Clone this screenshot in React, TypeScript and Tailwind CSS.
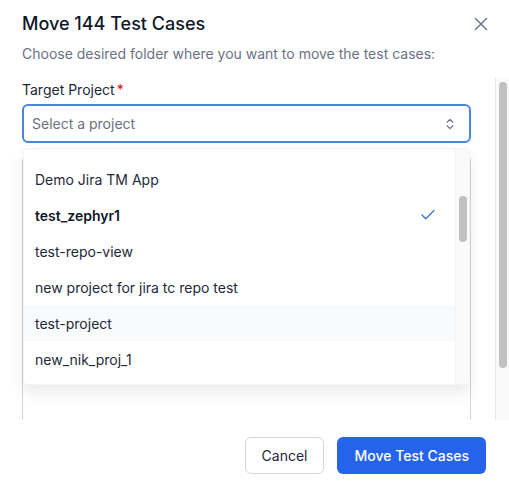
import { X, ChevronsUpDown, Check } from 'lucide-react'

const projects = [
  { id: 'demo', name: 'Demo Jira TM App' },
  { id: 'zephyr', name: 'test_zephyr1', selected: true },
  { id: 'repo', name: 'test-repo-view' },
  { id: 'jira', name: 'new project for jira tc repo test' },
  { id: 'tp', name: 'test-project', hover: true },
  { id: 'nik', name: 'new_nik_proj_1' },
]

export default function App() {
  return (
    <div className="w-[509px] h-[489px] bg-white flex flex-col text-gray-900 overflow-hidden" style={{ fontFamily: 'Inter, "Noto Sans", sans-serif' }}>
      {/* Header */}
      <div className="px-[22px] pt-[12px] shrink-0">
        <div className="flex items-center justify-between">
          <h1 className="text-[18px] leading-[24px] font-medium text-gray-900">Move 144 Test Cases</h1>
          <button className="text-gray-500 mr-[-5px]">
            <X size={22} strokeWidth={1.5} />
          </button>
        </div>
        <p className="mt-[9px] text-[14px] leading-[18px] text-gray-500">
          Choose desired folder where you want to move the test cases:
        </p>
      </div>

      {/* Body */}
      <div className="flex-1 flex min-h-0 mt-[15px]">
        <div className="flex-1 min-w-0 relative overflow-hidden pl-[22px] pr-[24px]">
          <div className="mt-[3px] text-[14px] leading-[18px] text-gray-800">
            Target Project<span className="text-red-600 ml-[2px]">*</span>
          </div>
          <div className="mt-[5px] h-[39px] border-2 border-[#4a86e0] rounded-[6px] flex items-center justify-between pl-[8px] pr-[12px]">
            <span className="text-[14px] text-gray-500">Select a project</span>
            <ChevronsUpDown size={14} strokeWidth={2} className="text-gray-500" />
          </div>
          <div className="mt-[12px] h-[400px] border border-gray-300 rounded-[6px]" />

          {/* Dropdown menu */}
          <div className="absolute left-[23px] top-[70px] w-[447px] h-[237px] bg-white rounded-[4px] border border-gray-100 shadow-[0_8px_14px_rgba(0,0,0,0.08)] flex overflow-hidden">
            <div className="flex-1 pt-[12px]">
              {projects.map(p => (
                <div
                  key={p.id}
                  className={`h-[36px] flex items-center justify-between pl-[11px] pr-[18px] text-[14px] ${p.hover ? 'bg-gray-50' : ''} ${p.selected ? 'font-semibold text-gray-900' : 'text-gray-800'}`}
                >
                  <span>{p.name}</span>
                  {p.selected && <Check size={18} strokeWidth={1.75} className="text-[#3b6fd8]" />}
                </div>
              ))}
            </div>
            <div className="w-[14px] border-l border-gray-100 bg-[#fafafa] flex justify-center">
              <div className="mt-[47px] w-[8px] h-[46px] rounded-full bg-[#c1c1c1]" />
            </div>
          </div>
        </div>
        {/* Outer scrollbar */}
        <div className="w-[14px] border-l border-gray-200 bg-[#fafafa] flex justify-center">
          <div className="mt-[4px] w-[8px] h-[286px] rounded-full bg-[#c1c1c1]" />
        </div>
      </div>

      {/* Footer */}
      <div className="h-[69px] shrink-0 flex items-start justify-end gap-[13px] pr-[23px] pt-[17px]">
        <button className="h-[37px] px-[16px] rounded-[6px] border border-gray-300 bg-white text-[14px] text-gray-800">
          Cancel
        </button>
        <button className="h-[37px] px-[17px] rounded-[6px] bg-[#2563eb] text-[14px] font-medium text-white">
          Move Test Cases
        </button>
      </div>
    </div>
  )
}
